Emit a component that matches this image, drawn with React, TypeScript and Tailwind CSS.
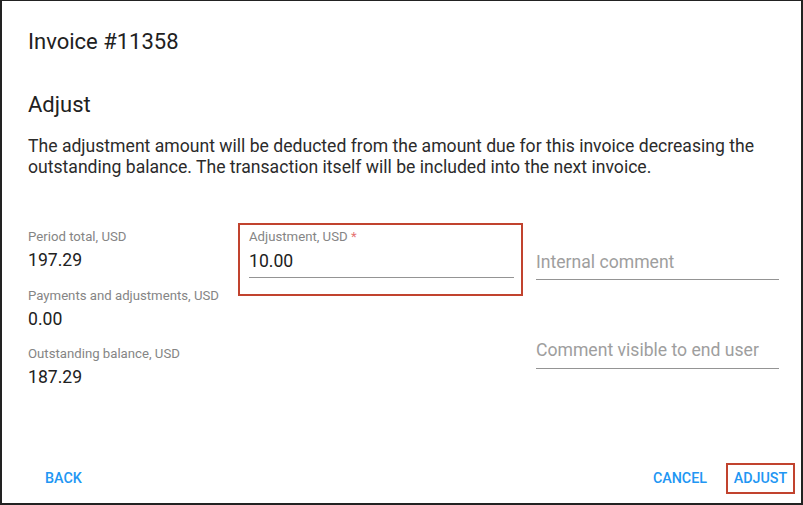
export default function App() {
  return (
    <div className="w-[803px] h-[505px] bg-white border-l-2 border-r-2 border-b-2 border-t border-[#222] font-['Roboto',sans-serif] text-[#212121] flex flex-col">
      <div className="pl-[26px] pr-[22px] flex-1">
        <h1 className="text-[22px] leading-[28px] pt-[27px]">Invoice #11358</h1>
        <h2 className="text-[22px] leading-[28px] mt-[35px]">Adjust</h2>
        <p className="text-[17.6px] leading-[21px] text-[#2b2b2b] mt-[17px]">
          The adjustment amount will be deducted from the amount due for this invoice decreasing the outstanding balance. The transaction itself will be included into the next invoice.
        </p>

        <div className="flex mt-[45px]">
          <div className="w-[210px] flex flex-col pt-[6px]">
            <div className="text-[13.2px] leading-[16px] text-[#858585]">Period total, USD</div>
            <div className="text-[17.6px] leading-[22px] mt-[4px]">197.29</div>
            <div className="text-[13.2px] leading-[16px] text-[#858585] mt-[17px]">Payments and adjustments, USD</div>
            <div className="text-[17.6px] leading-[22px] mt-[4px]">0.00</div>
            <div className="text-[13.2px] leading-[16px] text-[#858585] mt-[16px]">Outstanding balance, USD</div>
            <div className="text-[17.6px] leading-[22px] mt-[4px]">187.29</div>
          </div>

          <div className="w-[285px] h-[73px] border-2 border-[#c1432e] pl-[9px] pr-[7px] pt-[4px]">
            <div className="text-[13.2px] leading-[16px] text-[#858585]">
              Adjustment, USD <span className="text-[#e57373]">*</span>
            </div>
            <div className="text-[17.6px] leading-[22px] mt-[5px] pb-[5px] border-b border-[#949494]">10.00</div>
          </div>

          <div className="w-[243px] ml-[13px] flex flex-col">
            <div className="mt-[28px] text-[17.6px] leading-[22px] text-[#9e9e9e] pb-[6px] border-b border-[#949494]">Internal comment</div>
            <div className="mt-[59px] text-[17.6px] leading-[22px] text-[#9e9e9e] pb-[7px] border-b border-[#949494]">Comment visible to end user</div>
          </div>
        </div>
      </div>

      <div className="flex items-center pl-[41px] pr-[6px] pb-[9px]">
        <button className="text-[14.3px] font-medium text-[#2196f3] uppercase px-[2px] h-[30px]">Back</button>
        <div className="flex-1" />
        <button className="text-[14.3px] font-medium text-[#2196f3] uppercase h-[30px] mr-[19px]">Cancel</button>
        <button className="text-[14.3px] font-medium text-[#2196f3] uppercase h-[31px] w-[69px] border-2 border-[#c1432e]">Adjust</button>
      </div>
    </div>
  );
}
